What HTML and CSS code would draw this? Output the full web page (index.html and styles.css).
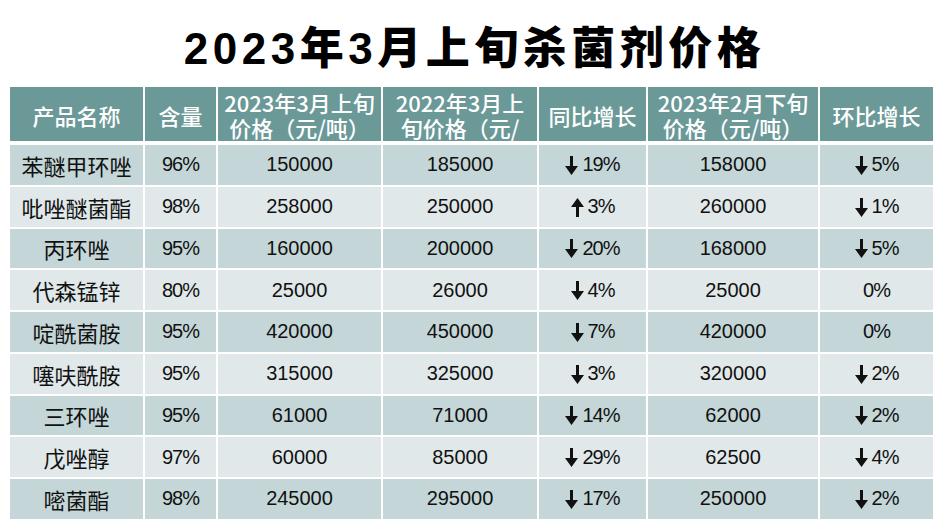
FILE: index.html
```html
<!DOCTYPE html>
<html lang="zh-CN">
<head>
<meta charset="utf-8">
<link rel="stylesheet" href="styles.css">
</head>
<body>
<h1 class="title">2023年3月上旬杀菌剂价格</h1>
<div class="table">
  <div class="th">产品名称</div>
  <div class="th">含量</div>
  <div class="th"><span class="ln">2023年3月上旬</span><span class="ln">价格（元/吨）</span></div>
  <div class="th"><span class="ln">2022年3月上</span><span class="ln">旬价格（元/</span></div>
  <div class="th">同比增长</div>
  <div class="th"><span class="ln">2023年2月下旬</span><span class="ln">价格（元/吨）</span></div>
  <div class="th">环比增长</div>

  <div class="td name dark">苯醚甲环唑</div><div class="td pct dark">96%</div><div class="td num dark">150000</div><div class="td num dark">185000</div><div class="td pct dark"><svg class="arr" viewBox="0 0 13 19"><path d="M5 0h3v11H5z M0 10h13L6.5 19z"/></svg>19%</div><div class="td num dark">158000</div><div class="td pct dark"><svg class="arr" viewBox="0 0 13 19"><path d="M5 0h3v11H5z M0 10h13L6.5 19z"/></svg>5%</div>

  <div class="td name light">吡唑醚菌酯</div><div class="td pct light">98%</div><div class="td num light">258000</div><div class="td num light">250000</div><div class="td pct light"><svg class="arr" viewBox="0 0 13 19"><path d="M5 19h3V8H5z M0 9h13L6.5 0z"/></svg>3%</div><div class="td num light">260000</div><div class="td pct light"><svg class="arr" viewBox="0 0 13 19"><path d="M5 0h3v11H5z M0 10h13L6.5 19z"/></svg>1%</div>

  <div class="td name dark">丙环唑</div><div class="td pct dark">95%</div><div class="td num dark">160000</div><div class="td num dark">200000</div><div class="td pct dark"><svg class="arr" viewBox="0 0 13 19"><path d="M5 0h3v11H5z M0 10h13L6.5 19z"/></svg>20%</div><div class="td num dark">168000</div><div class="td pct dark"><svg class="arr" viewBox="0 0 13 19"><path d="M5 0h3v11H5z M0 10h13L6.5 19z"/></svg>5%</div>

  <div class="td name light">代森锰锌</div><div class="td pct light">80%</div><div class="td num light">25000</div><div class="td num light">26000</div><div class="td pct light"><svg class="arr" viewBox="0 0 13 19"><path d="M5 0h3v11H5z M0 10h13L6.5 19z"/></svg>4%</div><div class="td num light">25000</div><div class="td pct light">0%</div>

  <div class="td name dark">啶酰菌胺</div><div class="td pct dark">95%</div><div class="td num dark">420000</div><div class="td num dark">450000</div><div class="td pct dark"><svg class="arr" viewBox="0 0 13 19"><path d="M5 0h3v11H5z M0 10h13L6.5 19z"/></svg>7%</div><div class="td num dark">420000</div><div class="td pct dark">0%</div>

  <div class="td name light">噻呋酰胺</div><div class="td pct light">95%</div><div class="td num light">315000</div><div class="td num light">325000</div><div class="td pct light"><svg class="arr" viewBox="0 0 13 19"><path d="M5 0h3v11H5z M0 10h13L6.5 19z"/></svg>3%</div><div class="td num light">320000</div><div class="td pct light"><svg class="arr" viewBox="0 0 13 19"><path d="M5 0h3v11H5z M0 10h13L6.5 19z"/></svg>2%</div>

  <div class="td name dark">三环唑</div><div class="td pct dark">95%</div><div class="td num dark">61000</div><div class="td num dark">71000</div><div class="td pct dark"><svg class="arr" viewBox="0 0 13 19"><path d="M5 0h3v11H5z M0 10h13L6.5 19z"/></svg>14%</div><div class="td num dark">62000</div><div class="td pct dark"><svg class="arr" viewBox="0 0 13 19"><path d="M5 0h3v11H5z M0 10h13L6.5 19z"/></svg>2%</div>

  <div class="td name light">戊唑醇</div><div class="td pct light">97%</div><div class="td num light">60000</div><div class="td num light">85000</div><div class="td pct light"><svg class="arr" viewBox="0 0 13 19"><path d="M5 0h3v11H5z M0 10h13L6.5 19z"/></svg>29%</div><div class="td num light">62500</div><div class="td pct light"><svg class="arr" viewBox="0 0 13 19"><path d="M5 0h3v11H5z M0 10h13L6.5 19z"/></svg>4%</div>

  <div class="td name dark">嘧菌酯</div><div class="td pct dark">98%</div><div class="td num dark">245000</div><div class="td num dark">295000</div><div class="td pct dark"><svg class="arr" viewBox="0 0 13 19"><path d="M5 0h3v11H5z M0 10h13L6.5 19z"/></svg>17%</div><div class="td num dark">250000</div><div class="td pct dark"><svg class="arr" viewBox="0 0 13 19"><path d="M5 0h3v11H5z M0 10h13L6.5 19z"/></svg>2%</div>
</div>
</body>
</html>
```
FILE: styles.css
```css
html, body {
  margin: 0;
  padding: 0;
  background: #ffffff;
}
body {
  width: 945px;
  height: 531px;
  overflow: hidden;
  font-family: "Noto Sans CJK SC", sans-serif;
}
.title {
  margin: 0;
  height: 87px;
  box-sizing: border-box;
  padding-top: 11px;
  padding-left: 4px;
  display: flex;
  align-items: center;
  justify-content: center;
  font-family: "Liberation Sans", "Noto Sans CJK SC", sans-serif;
  font-weight: 900;
  font-size: 44px;
  letter-spacing: 4.5px;
  color: #000;
  line-height: 1;
}
.table {
  margin-left: 10px;
  width: 923px;
  display: grid;
  grid-template-columns: 133px 71px 163px 154px 107px 170px 113px;
  grid-template-rows: 56px repeat(9, 39.75px);
  column-gap: 2px;
  row-gap: 2px;
}
.th {
  background: #6a9998;
  color: #ffffff;
  font-family: "Noto Sans CJK SC", sans-serif;
  font-weight: 500;
  font-size: 22px;
  line-height: 26px;
  display: flex;
  flex-direction: column;
  align-items: center;
  justify-content: center;
  text-align: center;
  white-space: nowrap;
  overflow: hidden;
  margin-bottom: 2px;
  padding-top: 1px;
}
.ln {
  display: block;
  height: 25px;
  line-height: 25px;
}
.td {
  display: flex;
  align-items: center;
  justify-content: center;
  color: #111;
  white-space: nowrap;
}
.dark { background: #c4d6d7; }
.light { background: #e0e8e9; }
.name {
  font-family: "Noto Sans CJK SC", sans-serif;
  font-size: 22px;
}
.num {
  font-family: "Liberation Sans", sans-serif;
  font-size: 20px;
}
.pct {
  font-family: "Liberation Sans", sans-serif;
  font-size: 20px;
  letter-spacing: -1px;
}
.arr {
  width: 13px;
  height: 19px;
  fill: #111;
  margin-right: 4px;
  margin-top: 1px;
}
```
